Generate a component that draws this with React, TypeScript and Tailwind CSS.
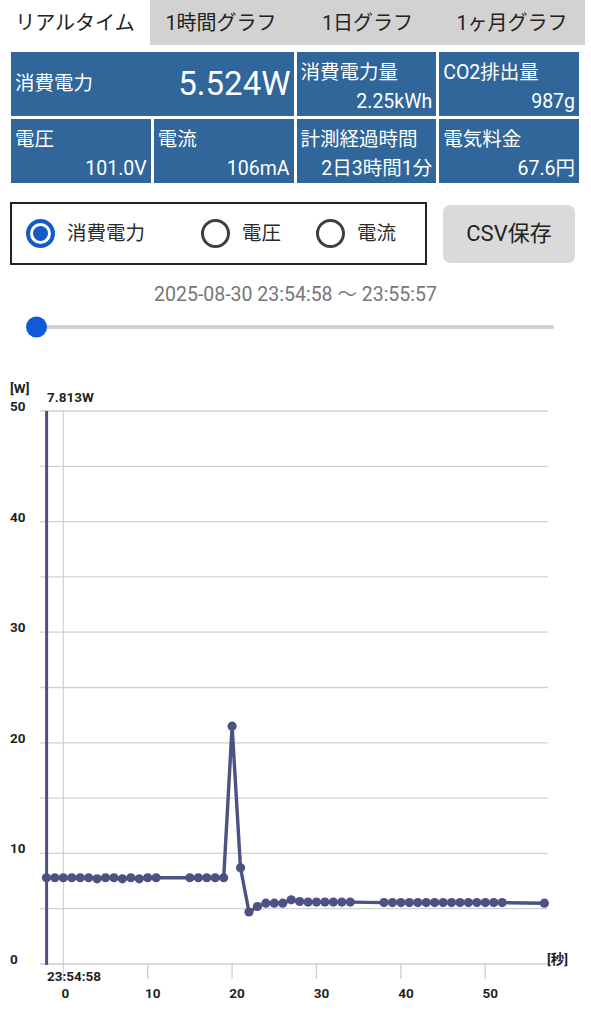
import React from "react";

const FONT = { fontFamily: 'Roboto, "Noto Sans CJK JP", sans-serif' };

const X = (t: number) => 63.3 + t * 8.44;
const Y = (v: number) => 964 - v * 11.06;

const data: [number, number][] = [];
for (let t = -2; t <= 11; t++) data.push([t, t === 4 || t === 7 || t === 9 ? 7.7 : 7.8]);
for (let t = 15; t <= 19; t++) data.push([t, 7.8]);
data.push([20, 21.5], [21, 8.7], [22, 4.7], [23, 5.2]);
for (let t = 24; t <= 26; t++) data.push([t, 5.5]);
data.push([27, 5.8]);
for (let t = 28; t <= 34; t++) data.push([t, t === 28 ? 5.65 : 5.6]);
for (let t = 38; t <= 52; t++) data.push([t, 5.55]);
data.push([57, 5.5]);

const LINE = "#4c5383";

function Tile({ label, value, className = "" }: { label: string; value: string; className?: string }) {
  return (
    <div className={"bg-[#306699] text-white flex flex-col h-[64px] " + className}>
      <div className="pl-[4px] pt-[9px] h-[33px] leading-[24px] text-[19.5px]">{label}</div>
      <div className="mt-auto pr-[4px] h-[24px] mb-[2px] leading-[24px] text-[19.5px] text-right">{value}</div>
    </div>
  );
}

function Radio({ checked, label, className = "" }: { checked?: boolean; label: string; className?: string }) {
  return (
    <div className={"flex items-center " + className}>
      {checked ? (
        <div className="w-[29px] h-[29px] rounded-full border-[4px] border-[#1559c5] flex items-center justify-center">
          <div className="w-[15px] h-[15px] rounded-full bg-[#1559c5]" />
        </div>
      ) : (
        <div className="w-[29px] h-[29px] rounded-full border-[3.5px] border-[#3d3f44]" />
      )}
      <span className="ml-[12px] text-[19.5px] text-[#2a2a2a] leading-[24px]">{label}</span>
    </div>
  );
}

export default function App() {
  const yTicks = [50, 40, 30, 20, 10, 0];
  const grid = [5, 10, 15, 20, 25, 30, 35, 40, 45, 50];
  const xTicks = [10, 20, 30, 40, 50];
  const points = data.map(([t, v]) => `${X(t).toFixed(1)},${Y(v).toFixed(1)}`).join(" ");
  return (
    <div className="w-[591px] h-[1024px] bg-white overflow-hidden" style={FONT}>
      {/* Tabs */}
      <div className="flex h-[45px] text-[20px] text-[#222]">
        <div className="w-[150px] flex items-center justify-center bg-white">リアルタイム</div>
        <div className="w-[146px] flex items-center justify-center bg-[#d2d2d2] pr-[4px]">1時間グラフ</div>
        <div className="w-[143px] flex items-center justify-center bg-[#d2d2d2]">1日グラフ</div>
        <div className="w-[146px] flex items-center justify-center bg-[#d2d2d2]">1ヶ月グラフ</div>
      </div>

      {/* Tiles */}
      <div className="ml-[11px] mt-[7px] w-[568px] grid grid-cols-4 gap-[3px]">
        <div className="col-span-2 bg-[#306699] text-white h-[64px] flex items-center justify-between pl-[4px] pr-[3px]">
          <span className="text-[19.5px]">消費電力</span>
          <span className="text-[33px] leading-[40px]">5.524W</span>
        </div>
        <Tile label="消費電力量" value="2.25kWh" />
        <Tile label="CO2排出量" value="987g" />
        <Tile label="電圧" value="101.0V" />
        <Tile label="電流" value="106mA" />
        <Tile label="計測経過時間" value="2日3時間1分" />
        <Tile label="電気料金" value="67.6円" />
      </div>

      {/* Radio row */}
      <div className="flex items-center mt-[19px] h-[63px]">
        <div className="ml-[10px] w-[417px] h-[63px] border-2 border-[#222] flex items-center">
          <Radio checked label="消費電力" className="ml-[14px]" />
          <Radio label="電圧" className="ml-[56px]" />
          <Radio label="電流" className="ml-[35px]" />
        </div>
        <div className="ml-[16px] w-[132px] h-[58px] rounded-[7px] bg-[#dadada] flex items-center justify-center text-[22px] text-[#222]">
          CSV保存
        </div>
      </div>

      {/* Date range */}
      <div className="mt-[18px] h-[24px] leading-[24px] text-[19.5px] text-[#777] text-center">
        2025-08-30 23:54:58 〜 23:55:57
      </div>

      {/* Slider */}
      <div className="h-[39px] flex items-center pl-[26px] pr-[37px]">
        <div className="relative w-full h-[4px] bg-[#d0d0d0] rounded-full">
          <div className="absolute left-0 top-1/2 -translate-y-1/2 w-[21px] h-[21px] rounded-full bg-[#0f5ad6]" />
        </div>
      </div>

      {/* Chart */}
      <svg width={591} height={678} viewBox="0 346 591 678" className="block">
        {grid.map((g) => (
          <line key={g} x1={40} x2={548} y1={Y(g)} y2={Y(g)} stroke="#d2d2d2" strokeWidth={1.3} />
        ))}
        <line x1={40} x2={548} y1={964} y2={964} stroke="#cfcfcf" strokeWidth={1.3} />
        <line x1={X(0)} x2={X(0)} y1={411} y2={980} stroke="#cbc6d4" strokeWidth={1} />
        {xTicks.map((t) => (
          <line key={t} x1={X(t)} x2={X(t)} y1={964} y2={979} stroke="#cfcfcf" strokeWidth={1.3} />
        ))}
        <g style={{ fontFamily: 'Roboto, "Noto Sans CJK JP", sans-serif', fontWeight: 700 }} fontSize={13.5} fill="#1f1f1f">
          <text x={10} y={393}>[W]</text>
          {yTicks.map((v) => (
            <text key={v} x={10} y={Y(v)}>{v}</text>
          ))}
          <text x={47} y={402}>7.813W</text>
          <text x={47} y={981}>23:54:58</text>
          <text x={X(0) + 2} y={998} textAnchor="middle">0</text>
          {xTicks.map((t) => (
            <text key={t} x={X(t) + 5} y={998} textAnchor="middle">{t}</text>
          ))}
          <text x={547} y={964}>[秒]</text>
        </g>
        <line x1={46.6} x2={46.6} y1={411} y2={965} stroke={LINE} strokeWidth={3} />
        <polyline points={points} fill="none" stroke={LINE} strokeWidth={3.4} strokeLinejoin="round" />
        {data.map(([t, v]) => (
          <circle key={t} cx={X(t)} cy={Y(v)} r={4.6} fill={LINE} />
        ))}
      </svg>
    </div>
  );
}
